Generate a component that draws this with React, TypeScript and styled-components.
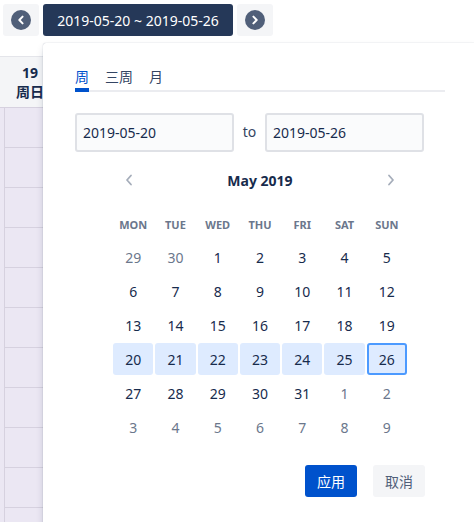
import React from 'react';
import styled, { createGlobalStyle } from 'styled-components';

const GlobalStyle = createGlobalStyle`
  html, body {
    margin: 0;
    padding: 0;
    background: #fff;
  }
  body {
    font-family: "Noto Sans", "Noto Sans CJK SC", sans-serif;
    color: #172b4d;
    overflow: hidden;
  }
  * {
    box-sizing: border-box;
  }
`;

const Page = styled.div`
  position: relative;
  width: 474px;
  height: 522px;
  overflow: hidden;
`;

const Toolbar = styled.div`
  height: 57px;
  display: flex;
  align-items: flex-start;
  gap: 4px;
  padding: 4px 3px 0;
  border-bottom: 1px solid #e4e5ea;
`;

const IconBtn = styled.button`
  width: 36px;
  height: 32px;
  border: 0;
  border-radius: 3px;
  background: #f4f5f7;
  display: flex;
  align-items: center;
  justify-content: center;
  padding: 0;
`;

const RangeBtn = styled.button`
  width: 190px;
  height: 32px;
  border: 0;
  border-radius: 3px;
  background: #253858;
  color: #fff;
  font-family: inherit;
  font-size: 14px;
  padding: 0;
`;

const Scheduler = styled.div`
  display: flex;
  flex-direction: column;
`;

const HeadRow = styled.div`
  height: 51px;
  background: #f4f5f7;
  border-bottom: 1px solid #d6d1df;
  display: flex;
  padding-left: 4px;
`;

const DayHead = styled.div`
  width: 52px;
  display: flex;
  flex-direction: column;
  align-items: center;
  justify-content: center;
  font-size: 14px;
  font-weight: 700;
  line-height: 19px;
  color: #172b4d;
`;

const Body = styled.div`
  background: #ebe7f3;
  padding-left: 4px;
`;

const Column = styled.div`
  width: 60px;
  border-left: 1px solid #d6d1df;
`;

const Slot = styled.div`
  height: 40px;
  border-bottom: 1px solid #d6d1df;
`;

const Popup = styled.div`
  position: absolute;
  top: 43px;
  left: 43px;
  width: 434px;
  padding: 25px 32px 32px;
  background: #fff;
  border-radius: 3px;
  box-shadow: 0 0 1px rgba(9, 30, 66, 0.35), 0 4px 8px -2px rgba(9, 30, 66, 0.25);
`;

const Tabs = styled.div`
  display: flex;
  gap: 16px;
  border-bottom: 2px solid #ebecf0;
`;

const Tab = styled.div<{ $active?: boolean }>`
  position: relative;
  font-size: 14px;
  line-height: 17px;
  padding-bottom: 5px;
  color: ${(p) => (p.$active ? '#0052cc' : '#344563')};
  &::after {
    content: '';
    display: ${(p) => (p.$active ? 'block' : 'none')};
    position: absolute;
    left: 0;
    right: 0;
    bottom: -2px;
    height: 4px;
    background: #0052cc;
  }
`;

const InputsRow = styled.div`
  margin-top: 21px;
  display: flex;
  align-items: center;
  width: 349px;
`;

const DateInput = styled.input`
  width: 159px;
  height: 39px;
  border: 2px solid #dfe1e6;
  border-radius: 3px;
  background: #fafbfc;
  padding: 0 6px;
  font-family: inherit;
  font-size: 14px;
  color: #172b4d;
  outline: none;
`;

const To = styled.span`
  flex: 1;
  text-align: center;
  font-size: 14px;
  color: #344563;
  padding-bottom: 3px;
`;

const Calendar = styled.div`
  width: 296px;
  margin: 0 auto;
`;

const MonthHeader = styled.div`
  margin-top: 16px;
  height: 24px;
  display: flex;
  align-items: center;
  justify-content: space-between;
`;

const NavBtn = styled.div`
  width: 34px;
  height: 24px;
  display: flex;
  align-items: center;
  justify-content: center;
`;

const MonthTitle = styled.div`
  font-size: 14px;
  font-weight: 700;
  color: #172b4d;
`;

const Weekdays = styled.div`
  margin-top: 23px;
  display: grid;
  grid-template-columns: repeat(7, 1fr);
  height: 20px;
  line-height: 20px;
  font-size: 11px;
  font-weight: 700;
  color: #6b778c;
  text-align: center;
`;

const Days = styled.div`
  margin-top: 5px;
  display: grid;
  grid-template-columns: repeat(7, 1fr);
  grid-auto-rows: 34px;
`;

const DayCell = styled.div`
  padding: 1px;
`;

const Day = styled.div<{ $muted?: boolean; $selected?: boolean; $focused?: boolean }>`
  height: 100%;
  display: flex;
  align-items: center;
  justify-content: center;
  border-radius: 3px;
  font-size: 14px;
  color: ${(p) => (p.$muted ? '#6b778c' : '#172b4d')};
  background: ${(p) => (p.$selected ? '#deebff' : 'transparent')};
  border: 2px solid ${(p) => (p.$focused ? '#4c9aff' : 'transparent')};
`;

const Footer = styled.div`
  margin-top: 21px;
  display: flex;
  justify-content: flex-end;
  gap: 16px;
  padding-right: 20px;
`;

const ActionBtn = styled.button<{ $primary?: boolean }>`
  width: 52px;
  height: 32px;
  border: 0;
  border-radius: 3px;
  font-family: inherit;
  font-size: 14px;
  padding: 0;
  background: ${(p) => (p.$primary ? '#0052cc' : '#f4f5f7')};
  color: ${(p) => (p.$primary ? '#fff' : '#505f79')};
`;

function CircleChevron({ dir }: { dir: 'left' | 'right' }) {
  const d = dir === 'left' ? 'M11.6 6.6 L8.3 10 L11.6 13.4' : 'M8.4 6.6 L11.7 10 L8.4 13.4';
  return (
    <svg width="20" height="20" viewBox="0 0 20 20">
      <circle cx="10" cy="10" r="10" fill="#505f79" />
      <path d={d} fill="none" stroke="#fff" strokeWidth="2" strokeLinecap="round" strokeLinejoin="round" />
    </svg>
  );
}

function Chevron({ dir }: { dir: 'left' | 'right' }) {
  const d = dir === 'left' ? 'M6 1.5 L2 6 L6 10.5' : 'M2 1.5 L6 6 L2 10.5';
  return (
    <svg width="8" height="12" viewBox="0 0 8 12">
      <path d={d} fill="none" stroke="#a5adba" strokeWidth="1.8" strokeLinecap="round" strokeLinejoin="round" />
    </svg>
  );
}

const weekdays = ['MON', 'TUE', 'WED', 'THU', 'FRI', 'SAT', 'SUN'];

type Cell = { n: number; muted?: boolean };

const cells: Cell[] = [
  { n: 29, muted: true },
  { n: 30, muted: true },
  ...Array.from({ length: 31 }, (_, i) => ({ n: i + 1 })),
  ...Array.from({ length: 9 }, (_, i) => ({ n: i + 1, muted: true })),
];

export default function App() {
  return (
    <Page>
      <GlobalStyle />
      <Toolbar>
        <IconBtn>
          <CircleChevron dir="left" />
        </IconBtn>
        <RangeBtn>2019-05-20 ~ 2019-05-26</RangeBtn>
        <IconBtn>
          <CircleChevron dir="right" />
        </IconBtn>
      </Toolbar>
      <Scheduler>
        <HeadRow>
          <DayHead>
            <span>19</span>
            <span>周日</span>
          </DayHead>
        </HeadRow>
        <Body>
          <Column>
            {Array.from({ length: 11 }, (_, i) => (
              <Slot key={i} />
            ))}
          </Column>
        </Body>
      </Scheduler>

      <Popup>
        <Tabs>
          <Tab $active>周</Tab>
          <Tab>三周</Tab>
          <Tab>月</Tab>
        </Tabs>
        <InputsRow>
          <DateInput readOnly value="2019-05-20" />
          <To>to</To>
          <DateInput readOnly value="2019-05-26" />
        </InputsRow>
        <Calendar>
          <MonthHeader>
            <NavBtn>
              <Chevron dir="left" />
            </NavBtn>
            <MonthTitle>May 2019</MonthTitle>
            <NavBtn>
              <Chevron dir="right" />
            </NavBtn>
          </MonthHeader>
          <Weekdays>
            {weekdays.map((w) => (
              <div key={w}>{w}</div>
            ))}
          </Weekdays>
          <Days>
            {cells.map((c, i) => {
              const selected = !c.muted && c.n >= 20 && c.n <= 26;
              return (
                <DayCell key={i}>
                  <Day $muted={c.muted} $selected={selected} $focused={selected && c.n === 26}>
                    {c.n}
                  </Day>
                </DayCell>
              );
            })}
          </Days>
        </Calendar>
        <Footer>
          <ActionBtn $primary>应用</ActionBtn>
          <ActionBtn>取消</ActionBtn>
        </Footer>
      </Popup>
    </Page>
  );
}
